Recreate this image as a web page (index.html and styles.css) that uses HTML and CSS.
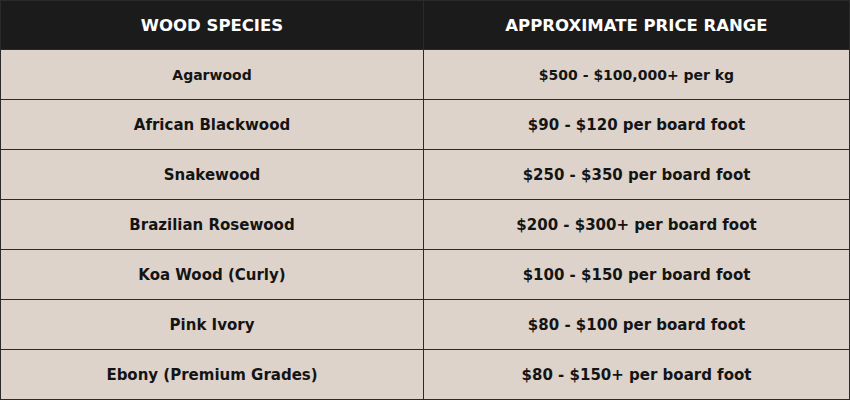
FILE: index.html
```html
<!DOCTYPE html>
<html>
<head>
<meta charset="utf-8">
<link rel="stylesheet" href="styles.css">
</head>
<body>
<table class="price-table">
  <colgroup>
    <col class="col-species">
    <col class="col-price">
  </colgroup>
  <thead>
    <tr><th>WOOD SPECIES</th><th>APPROXIMATE PRICE RANGE</th></tr>
  </thead>
  <tbody>
    <tr class="small"><td>Agarwood</td><td>$500 - $100,000+ per kg</td></tr>
    <tr><td>African Blackwood</td><td>$90 - $120 per board foot</td></tr>
    <tr><td>Snakewood</td><td>$250 - $350 per board foot</td></tr>
    <tr><td>Brazilian Rosewood</td><td>$200 - $300+ per board foot</td></tr>
    <tr><td>Koa Wood (Curly)</td><td>$100 - $150 per board foot</td></tr>
    <tr><td>Pink Ivory</td><td>$80 - $100 per board foot</td></tr>
    <tr><td>Ebony (Premium Grades)</td><td>$80 - $150+ per board foot</td></tr>
  </tbody>
</table>
</body>
</html>
```
FILE: styles.css
```css
html, body {
  margin: 0;
  padding: 0;
  background: #ddd3ca;
}
.price-table {
  width: 850px;
  border-collapse: collapse;
  table-layout: fixed;
  font-family: "DejaVu Sans", sans-serif;
  font-weight: bold;
}
.col-species {
  width: 423px;
}
.price-table th,
.price-table td {
  height: 50px;
  padding: 0;
  text-align: center;
  vertical-align: middle;
  box-sizing: border-box;
  border: 1px solid #2a2a2a;
}
.price-table th {
  height: 49px;
  background: #1b1b1b;
  color: #ffffff;
  font-size: 16.5px;
}
.price-table td {
  background: #ddd3ca;
  color: #141414;
  font-size: 15px;
  border-top-color: #4a4a4a;
}
.price-table tr.small td {
  font-size: 14px;
}
```
